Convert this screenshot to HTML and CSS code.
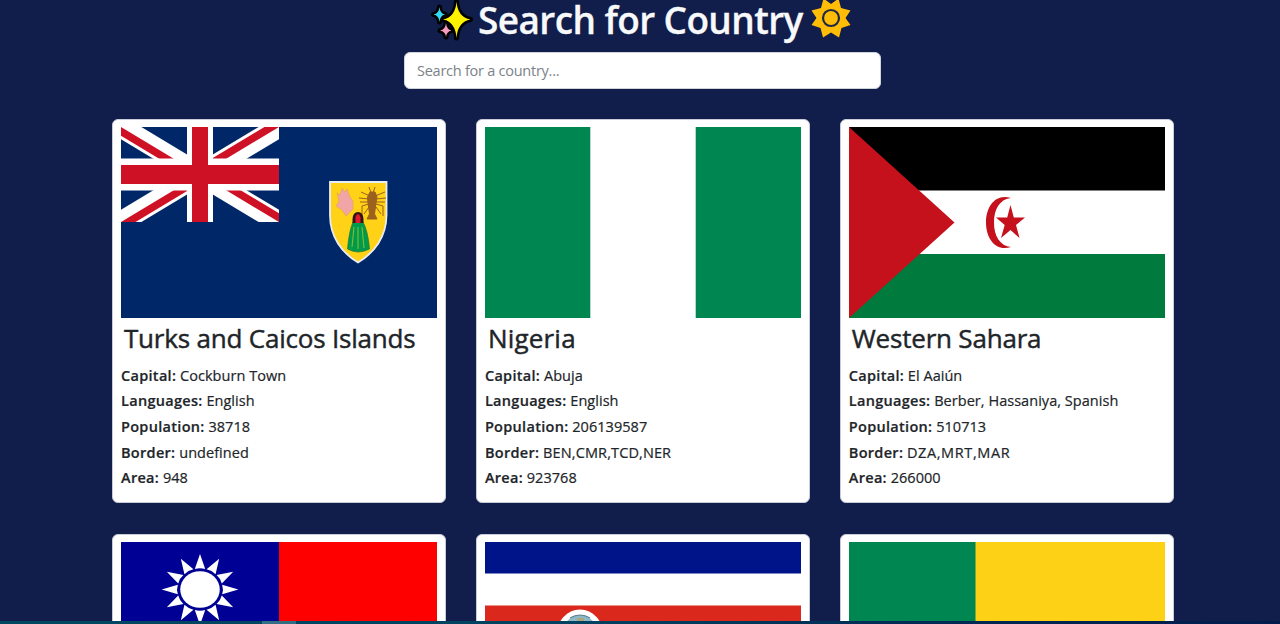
FILE: index.html
```html
<!DOCTYPE html>
<html lang="en">
<head>
<meta charset="utf-8">
<title>Search for Country</title>
<link rel="stylesheet" href="styles.css">
</head>
<body>
<main class="page">
  <header class="header">
    <h1 class="heading">
      <svg class="sparkles" viewBox="0 0 42 40"><g stroke="#000" stroke-width="5" stroke-linejoin="round" paint-order="stroke"><path fill="#fff200" d="M25.500 1.500Q26.500 17 39.500 19.500Q26.500 22 25.500 38Q24.500 22 12 19.500Q24.500 17 25.500 1.500Z"/><path fill="#35d6f5" d="M8.500 7Q9 13.500 14 14.500Q9 15.500 8.500 22Q8 15.500 2.500 14.500Q8 13.500 8.500 7Z"/><path fill="#f79ac0" d="M15 23Q15.500 29.500 20.500 30.500Q15.500 31.500 15 37Q14.500 31.500 9 30.500Q14.500 29.500 15 23Z"/></g></svg>
      <span class="heading-text">Search for Country</span>
      <svg class="sun" viewBox="-20 -20 40 40"><path fill="#ffbd07" d="M0-14L7.500-19.500L10-10L19.500-7.500L14.500 0L19.500 7L10.500 10L8 19.500L0 14.500L-8 19.500L-10.500 10L-19.500 7L-14.500 0L-19.500-7.500L-10-10L-7.500-19.500Z"/><circle r="8" fill="#ffbd07" stroke="#202845" stroke-width="2.200"/></svg>
    </h1>
    <input class="search" type="text" placeholder="Search for a country...">
  </header>
  <section class="grid">
    <article class="card">
      <svg class="flag" viewBox="0 0 316 191" preserveAspectRatio="none">
        <defs><clipPath id="canton"><path d="M0 0H158V95H0Z"/></clipPath><clipPath id="saltire"><path d="M79 47.500H158V95ZM79 47.500V95H0ZM79 47.500H0V0ZM79 47.500V0H158Z"/></clipPath></defs>
        <path fill="#002868" d="M0 0H316V191H0Z"/>
        <g clip-path="url(#canton)"><path stroke="#fff" stroke-width="21" d="M0 0L158 95M158 0L0 95"/><path clip-path="url(#saltire)" stroke="#cf1126" stroke-width="15" d="M0 0L158 95M158 0L0 95"/><path stroke="#fff" stroke-width="26" d="M79 0V95"/><path stroke="#fff" stroke-width="32" d="M0 47.500H158"/><path stroke="#cf1126" stroke-width="16" d="M79 0V95"/><path stroke="#cf1126" stroke-width="19" d="M0 47.500H158"/></g>
        <path fill="#ffd117" stroke="#e8edf5" stroke-width="1.800" d="M209 55H265.500V88C265.500 110 253 126 237 135.500C221 126 209 110 209 88Z"/>
        <path fill="#f1a5a6" stroke="#e6a35c" stroke-width=".7" d="M216 66L219 68L221 61L224 65L226 62L229 70L232 74L232 82L225 89L221 83L215 79L218 74Z"/>
        <g stroke="#9c611c" fill="#9c611c"><path stroke-width="1" fill="none" d="M248 60L250 66M254 60L252 66M249 69L240 65M254 69L264 65M248 72L238 71M255 72L265 71M248 75L239 75M254 75L264 75M248 77L241 79V89M255 77L262 79V89M248 80L243 87M255 80L260 87"/><path d="M249 65H254L256 70L255 76L253.500 87L256 92H246L248.500 87L247 76L246.500 70Z"/></g>
        <path fill="#009b4a" stroke="#207a30" stroke-width=".7" d="M232 95Q228 104 226.500 122Q237 128 248.500 122Q247 104 242 95Z"/><path stroke="#b9c32d" stroke-width=".8" d="M233 100L231 120M237 100V122M241 100L243 121"/><path fill="#301418" d="M231.500 96V92Q232 85 237 85Q242 85 242.500 92V96Z"/><path fill="#e01a31" d="M234.500 96V90Q237 84 239.500 90V96Z"/>
      </svg>
      <h2 class="name">Turks and Caicos Islands</h2>
      <p class="fact"><b>Capital:</b> Cockburn Town</p>
      <p class="fact"><b>Languages:</b> English</p>
      <p class="fact"><b>Population:</b> 38718</p>
      <p class="fact"><b>Border:</b> undefined</p>
      <p class="fact"><b>Area:</b> 948</p>
    </article>
    <article class="card">
      <svg class="flag" viewBox="0 0 316 191" preserveAspectRatio="none"><path fill="#fff" d="M0 0H316V191H0Z"/><path fill="#008751" d="M0 0H105.300V191H0ZM210.700 0H316V191H210.700Z"/></svg>
      <h2 class="name name-short">Nigeria</h2>
      <p class="fact"><b>Capital:</b> Abuja</p>
      <p class="fact"><b>Languages:</b> English</p>
      <p class="fact"><b>Population:</b> 206139587</p>
      <p class="fact"><b>Border:</b> <span class="codes">BEN,CMR,TCD,NER</span></p>
      <p class="fact"><b>Area:</b> 923768</p>
    </article>
    <article class="card">
      <svg class="flag" viewBox="0 0 316 191" preserveAspectRatio="none"><path fill="#fff" d="M0 0H316V191H0Z"/><path d="M0 0H316V63.500H0Z"/><path fill="#007a3d" d="M0 127H316V191H0Z"/><path fill="#c4111b" d="M0 0L105.500 95.500L0 191Z"/><path fill="#c4111b" d="M162 71C147 66 137 79 137 95.500C137 112 147 125 162 120C151 119 145 109 145 95.500C145 82 151 72 162 71Z"/><path fill="#c4111b" d="M161.500 78L164.800 90.500H176L167 98L170.500 111L161.500 103L152 111L155.700 98L147 90.500H158.200Z"/></svg>
      <h2 class="name">Western Sahara</h2>
      <p class="fact"><b>Capital:</b> El Aaiún</p>
      <p class="fact"><b>Languages:</b> Berber, Hassaniya, Spanish</p>
      <p class="fact"><b>Population:</b> 510713</p>
      <p class="fact"><b>Border:</b> <span class="codes codes-wide">DZA,MRT,MAR</span></p>
      <p class="fact"><b>Area:</b> 266000</p>
    </article>
    <article class="card">
      <svg class="flag" viewBox="0 0 316 191" preserveAspectRatio="none"><path fill="red" d="M0 0H316V191H0Z"/><path fill="#000095" d="M0 0H158V95H0Z"/>
        <g transform="translate(79 47.500) scale(1.080 1)" fill="#fff"><g id="rays"><path id="ray" d="M0-35.500L4.800-20.500Q0-22-4.800-20.500Z"/><use href="#ray" transform="rotate(30)"/><use href="#ray" transform="rotate(60)"/></g><use href="#rays" transform="rotate(90)"/><use href="#rays" transform="rotate(180)"/><use href="#rays" transform="rotate(270)"/><circle r="18.300"/></g></svg>
    </article>
    <article class="card">
      <svg class="flag" viewBox="0 0 316 191" preserveAspectRatio="none"><path fill="#fff" d="M0 0H316V191H0Z"/><path fill="#001489" d="M0 0H316V31.500H0ZM0 159H316V191H0Z"/><path fill="#da291c" d="M0 63.500H316V127H0Z"/><ellipse cx="95" cy="95" rx="24" ry="27.500" fill="#fff"/><ellipse cx="95" cy="91" rx="17" ry="18" fill="#8fb9c9"/><path fill="none" stroke="#5d7f8d" stroke-width="1.200" d="M85 76Q95 70 105 76"/><path fill="#a9a77c" d="M92 76H99V79H92Z"/></svg>
    </article>
    <article class="card">
      <svg class="flag" viewBox="0 0 316 191" preserveAspectRatio="none"><path fill="#fcd116" d="M0 0H316V95.500H0Z"/><path fill="#e8112d" d="M0 95.500H316V191H0Z"/><path fill="#008751" d="M0 0H126.500V191H0Z"/></svg>
    </article>
  </section>
</main>
<div class="progress"><div class="progress-mark"></div></div>
</body>
</html>
```
FILE: styles.css
```css
* { box-sizing: border-box; }
html, body { height: 100%; }
body {
  margin: 0;
  overflow: hidden;
  background: #111d4a;
  color: #212529;
  font-family: "Segoe UI", "Open Sans", "Noto Sans", sans-serif;
  display: flex;
  flex-direction: column;
}
.page { flex: 1; min-height: 0; overflow: hidden; }
.header { display: flex; flex-direction: column; align-items: center; padding-left: 5px; }
.heading {
  margin: 0;
  height: 52px;
  display: flex;
  align-items: flex-start;
  color: #f8f9fa;
  font-size: 37px;
  font-weight: 600;
  line-height: 39px;
}
.heading-text { width: 333px; height: 52px; margin-left: 5px; white-space: nowrap; letter-spacing: -0.6px; -webkit-text-stroke: 0.3px; }
.sparkles { width: 42px; height: 40px; margin-left: -3px; overflow: visible; }
.sun { width: 40px; height: 40px; margin-top: -2px; }
.search {
  width: 477px;
  height: 37px;
  padding: 0 12px;
  border: 1px solid #ced4da;
  border-radius: 6px;
  background: #fff;
  font: 14.5px "Segoe UI", "Open Sans", sans-serif;
  letter-spacing: -0.25px;
}
.search::placeholder { color: #7b8288; opacity: 1; }
.grid {
  display: grid;
  grid-template-columns: repeat(3, 334px);
  grid-auto-rows: 384px;
  gap: 31px 29.9px;
  padding: 30px 0 0 112px;
}
.card {
  padding: 7px 8px 8px;
  border: 1px solid #c9ccd6;
  border-radius: 6px;
  background: #fff;
}
.flag { display: block; width: 316px; height: 191px; }
.name {
  margin: 0 0 6.5px;
  padding: 4px 0 0 3px;
  height: 38px;
  font-size: 26px;
  font-weight: 500;
  line-height: 33px;
  letter-spacing: -0.2px;
  white-space: nowrap;
  -webkit-text-stroke: 0.45px;
}
.name-short { letter-spacing: 0.2px; }
.fact {
  margin: 0;
  font-size: 14.5px;
  line-height: 25.7px;
  white-space: nowrap;
  font-weight: 500;
  letter-spacing: 0.04px;
  -webkit-text-stroke: 0.2px;
}
.fact b { font-weight: 600; letter-spacing: 0.3px; }
.codes { letter-spacing: 0.12px; }
.codes-wide { letter-spacing: 0.6px; }
.progress { height: 3px; background: linear-gradient(90deg, #004862 0, #00425f 45%, #002b55 70%, #001c4c 100%); }
.progress-mark { width: 34px; height: 3px; margin-left: 262px; background: #326d84; }
```
